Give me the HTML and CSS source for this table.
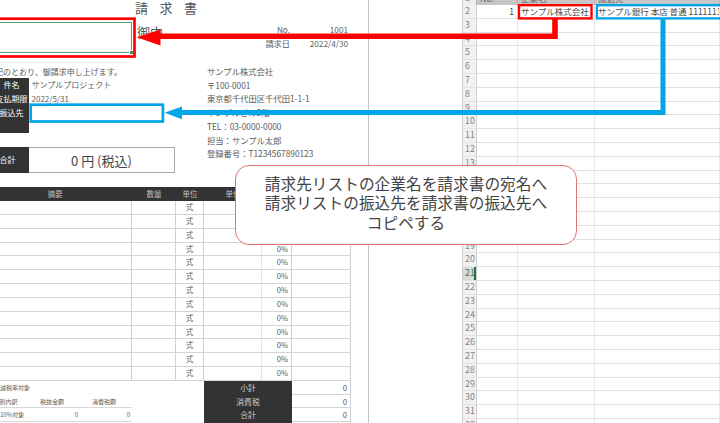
FILE: index.html
```html
<!DOCTYPE html>
<html lang="ja">
<head>
<meta charset="utf-8">
<link rel="stylesheet" href="styles.css">
</head>
<body>
<div class="screen">
  <section class="invoice">
    <div class="title">請求書</div>
    <div class="addr-row">
      <div class="addr-box"><span class="handle"></span></div>
      <div class="onchu">御中</div>
      <div class="meta">
        <div class="meta-row"><span class="k">No.</span><span class="v">1001</span></div>
        <div class="meta-row"><span class="k">請求日</span><span class="v">2022/4/30</span></div>
      </div>
    </div>
    <div class="info">
      <div class="info-left">
        <div class="greet">下記のとおり、御請求申し上げます。</div>
        <div class="field"><div class="lbl">件名</div><div class="val">サンプルプロジェクト</div></div>
        <div class="field"><div class="lbl">支払期限</div><div class="val">2022/5/31</div></div>
        <div class="field tall"><div class="lbl">振込先</div><div class="val"></div></div>
        <div class="total"><div class="lbl">合計</div><div class="total-box">0 円 (税込)</div></div>
      </div>
      <div class="info-right">
        <div>サンプル株式会社</div>
        <div>〒100-0001</div>
        <div>東京都千代田区千代田1-1-1</div>
        <div>サンプルビル3階</div>
        <div>TEL：03-0000-0000</div>
        <div>担当：サンプル太郎</div>
        <div>登録番号：T1234567890123</div>
      </div>
    </div>
    <div class="items">
      <div class="irow ihead"><div class="c1">摘要</div><div>数量</div><div>単位</div><div>単価</div><div>税率</div><div>金額</div></div>
      <div class="irow"><div></div><div></div><div>式</div><div></div><div class="r">0%</div><div></div></div>
      <div class="irow"><div></div><div></div><div>式</div><div></div><div class="r">0%</div><div></div></div>
      <div class="irow"><div></div><div></div><div>式</div><div></div><div class="r">0%</div><div></div></div>
      <div class="irow"><div></div><div></div><div>式</div><div></div><div class="r">0%</div><div></div></div>
      <div class="irow"><div></div><div></div><div>式</div><div></div><div class="r">0%</div><div></div></div>
      <div class="irow"><div></div><div></div><div>式</div><div></div><div class="r">0%</div><div></div></div>
      <div class="irow"><div></div><div></div><div>式</div><div></div><div class="r">0%</div><div></div></div>
      <div class="irow"><div></div><div></div><div>式</div><div></div><div class="r">0%</div><div></div></div>
      <div class="irow"><div></div><div></div><div>式</div><div></div><div class="r">0%</div><div></div></div>
      <div class="irow"><div></div><div></div><div>式</div><div></div><div class="r">0%</div><div></div></div>
      <div class="irow"><div></div><div></div><div>式</div><div></div><div class="r">0%</div><div></div></div>
      <div class="irow"><div></div><div></div><div>式</div><div></div><div class="r">0%</div><div></div></div>
      <div class="irow"><div></div><div></div><div>式</div><div></div><div class="r">0%</div><div></div></div>
    </div>
    <div class="foot">
      <div class="breakdown">
        <div class="brow"><div class="b1 cut1">軽減税率対象</div><div></div><div></div></div>
        <div class="brow line"><div class="b1 cut2">税率別内訳</div><div class="b2">税抜金額</div><div class="b3">消費税額</div></div>
        <div class="brow line"><div class="b1">10%対象</div><div class="b2 r">0</div><div class="b3 r">0</div></div>
      </div>
      <div class="tlabels"><div>小計</div><div>消費税</div><div>合計</div></div>
      <div class="tvals"><div>0</div><div>0</div><div>0</div></div>
    </div>
  </section>
  <div class="gap"></div>
  <section class="sheet">
    <div class="srow first"><div class="rh">1</div><div>No.</div><div>企業名</div><div>振込先</div></div>
    <div class="srow"><div class="rh">2</div><div class="num">1</div><div class="txt">サンプル株式会社</div><div class="txt">サンプル銀行 本店 普通 1111111</div></div>
    <div class="srow"><div class="rh">3</div><div></div><div></div><div></div></div>
    <div class="srow"><div class="rh">4</div><div></div><div></div><div></div></div>
    <div class="srow"><div class="rh">5</div><div></div><div></div><div></div></div>
    <div class="srow"><div class="rh">6</div><div></div><div></div><div></div></div>
    <div class="srow"><div class="rh">7</div><div></div><div></div><div></div></div>
    <div class="srow"><div class="rh">8</div><div></div><div></div><div></div></div>
    <div class="srow"><div class="rh">9</div><div></div><div></div><div></div></div>
    <div class="srow"><div class="rh">10</div><div></div><div></div><div></div></div>
    <div class="srow"><div class="rh">11</div><div></div><div></div><div></div></div>
    <div class="srow"><div class="rh">12</div><div></div><div></div><div></div></div>
    <div class="srow"><div class="rh">13</div><div></div><div></div><div></div></div>
    <div class="srow"><div class="rh">14</div><div></div><div></div><div></div></div>
    <div class="srow"><div class="rh">15</div><div></div><div></div><div></div></div>
    <div class="srow"><div class="rh">16</div><div></div><div></div><div></div></div>
    <div class="srow"><div class="rh">17</div><div></div><div></div><div></div></div>
    <div class="srow"><div class="rh">18</div><div></div><div></div><div></div></div>
    <div class="srow"><div class="rh">19</div><div></div><div></div><div></div></div>
    <div class="srow"><div class="rh">20</div><div></div><div></div><div></div></div>
    <div class="srow"><div class="rh sel">21</div><div></div><div></div><div></div></div>
    <div class="srow"><div class="rh">22</div><div></div><div></div><div></div></div>
    <div class="srow"><div class="rh">23</div><div></div><div></div><div></div></div>
    <div class="srow"><div class="rh">24</div><div></div><div></div><div></div></div>
    <div class="srow"><div class="rh">25</div><div></div><div></div><div></div></div>
    <div class="srow"><div class="rh">26</div><div></div><div></div><div></div></div>
    <div class="srow"><div class="rh">27</div><div></div><div></div><div></div></div>
    <div class="srow"><div class="rh">28</div><div></div><div></div><div></div></div>
    <div class="srow"><div class="rh">29</div><div></div><div></div><div></div></div>
    <div class="srow"><div class="rh">30</div><div></div><div></div><div></div></div>
    <div class="srow"><div class="rh">31</div><div></div><div></div><div></div></div>
    <div class="srow"><div class="rh">32</div><div></div><div></div><div></div></div>
  </section>
</div>

<svg class="overlay" width="720" height="423" viewBox="0 0 720 423">
  <rect x="-5" y="18.7" width="139.5" height="37.8" fill="none" stroke="#ff0000" stroke-width="2.7"/>
  <rect x="519" y="5.2" width="72.5" height="13.2" fill="none" stroke="#ff0000" stroke-width="2.4"/>
  <polyline points="555,18.5 555,36.3 158,36.3" fill="none" stroke="#ff0000" stroke-width="5.6"/>
  <polygon points="136.5,37.2 160.5,29.5 160.5,45.5" fill="#ff0000"/>
  <rect x="30.7" y="104.7" width="132.2" height="16.8" fill="none" stroke="#00a6e6" stroke-width="2.7"/>
  <rect x="596.9" y="5.2" width="140" height="13.2" fill="none" stroke="#00a6e6" stroke-width="2.4"/>
  <polyline points="663,18.5 663,112.5 180,112.5" fill="none" stroke="#00a6e6" stroke-width="5"/>
  <polygon points="164.5,112.8 182,106.5 182,119.2" fill="#00a6e6"/>
</svg>

<div class="callout">請求先リストの企業名を請求書の宛名へ<br>請求リストの振込先を請求書の振込先へ<br>コピペする</div>
</body>
</html>
```

FILE: styles.css
```css
* { box-sizing: border-box; margin: 0; padding: 0; }
html, body { width: 720px; height: 423px; overflow: hidden; background: #fff; }
body {
  position: relative;
  font-family: "Noto Sans CJK JP", "Noto Sans", sans-serif;
  color: #5c5c5c;
}
.screen { display: flex; width: 720px; height: 423px; }

/* ---------- invoice ---------- */
.invoice {
  width: 369px; flex: none;
  border-right: 1px solid #c4c4c4;
  overflow: hidden;
  font-size: 8px;
}
.title {
  height: 17px; padding-left: 135px;
  font-size: 13px; line-height: 15px; letter-spacing: 11.5px;
  color: #555; white-space: nowrap;
}
.addr-row { height: 48px; display: flex; }
.addr-box {
  position: relative; flex: none;
  width: 132px; height: 30.5px; margin-top: 5px;
  border: 1.5px solid #5a9e7a; border-left: none;
}
.handle {
  position: absolute; right: -3px; bottom: -3px;
  width: 5px; height: 5px; background: #3f8a62; border: 1px solid #fff;
}
.onchu { margin-left: 5px; margin-top: 8px; font-size: 13px; line-height: 14px; color: #555; }
.meta { margin-left: auto; margin-right: 20px; margin-top: 6px; font-size: 8.2px; }
.meta-row { display: flex; height: 13.6px; line-height: 13.6px; }
.meta-row .k { width: 40px; text-align: right; }
.meta-row .v { width: 58px; text-align: right; }

.info { display: flex; height: 108px; margin-bottom: 14px; }
.info-left { width: 207px; flex: none; }
.info-right { font-size: 8.3px; line-height: 13.7px; white-space: nowrap; }
.greet { height: 13px; line-height: 13px; margin-left: -13px; white-space: nowrap; }
.field { display: flex; height: 14px; }
.field.tall { height: 27px; }
.lbl {
  width: 29px; flex: none;
  background: #333; color: #fff;
  display: flex; justify-content: center;
  padding-right: 6px;
  line-height: 14px; white-space: nowrap;
}
.val { padding-left: 2.5px; line-height: 14px; white-space: nowrap; }
.total { display: flex; height: 26px; margin-top: 14px; }
.total .lbl { line-height: 26px; padding-right: 14px; }
.total-box {
  width: 146px; border: 1px solid #a8a8a8; border-left: none;
  display: flex; align-items: center; justify-content: center;
  font-size: 13px; color: #444; white-space: pre;
}

/* items table */
.irow {
  display: grid;
  grid-template-columns: 132px 44px 28px 58px 30px 59px;
  width: 351px; height: 13.85px;
}
.irow > div {
  border-right: 1px solid #cfcfcf; border-bottom: 1px solid #d4d4d4;
  text-align: center; line-height: 12.8px; font-size: 7.6px; color: #5c5c5c;
}
.irow > div.r { text-align: right; padding-right: 3px; }
.irow > div:nth-child(4) { border-right-color: #e4e4e4; }
.ihead { background: #333; height: 14px; }
.ihead > div { border: none; color: #bdbdbd; line-height: 14px; }
.ihead > .c1 { padding-right: 22px; }

/* foot */
.foot { display: grid; grid-template-columns: 204px 88px 59px; height: 42px; }
.breakdown { width: 132px; font-size: 6px; color: #5c5c5c; }
.brow {
  display: grid; grid-template-columns: 38px 52px 42px;
  height: 13.7px; line-height: 13px; white-space: nowrap;
}
.brow.line { border-bottom: 1px solid #d8d8d8; }
.cut1 { margin-left: -6px; }
.cut2 { margin-left: -12.6px; }
.b2, .b3 { padding-left: 2px; }
.b2.r { text-align: right; padding-right: 12px; }
.b3.r { text-align: right; padding-right: 2px; }
.tlabels { background: #333; color: #cfcfcf; font-size: 7.8px; }
.tlabels > div { height: 13.7px; line-height: 13.7px; text-align: center; }
.tvals { border-right: 1px solid #cfcfcf; font-size: 7.8px; }
.tvals > div {
  height: 13.7px; line-height: 13px; text-align: right; padding-right: 3px;
  border-bottom: 1px solid #d4d4d4;
}

/* ---------- gap between panes ---------- */
.gap { width: 94px; flex: none; border-right: 1px solid #cdcdcd; }

/* ---------- right spreadsheet ---------- */
.sheet { flex: 1; overflow: hidden; font-size: 8.5px; color: #4a4a4a; }
.srow {
  display: grid;
  grid-template-columns: 14px 41px 77px 1fr;
  height: 13.8px;
}
.srow > div {
  border-right: 1px solid #e8e8e8; border-bottom: 1px solid #e0e0e0;
  line-height: 12.8px; white-space: nowrap; overflow: hidden;
}
.srow > .rh {
  background: #f1f1f1; color: #858585; font-size: 8.8px;
  padding-left: 2px; border-right-color: #cfcfcf; border-bottom-color: #e4e4e4;
}
.srow > .rh.sel { background: #d9d9d9; color: #3c7a58; box-shadow: inset -2px 0 #217346; }
.srow.first { height: 5px; }
.srow.first > div {
  background: #c6c6c6; color: #666; display: flex; align-items: flex-end;
  padding-left: 3px; border-bottom: none; border-right-color: #b8b8b8;
}
.srow.first > .rh { background: #eeeeee; color: #999; padding-left: 2px; }
.srow > .num { text-align: right; padding-right: 3px; }
.srow > .txt { padding-left: 3px; }

/* ---------- overlays ---------- */
.overlay { position: absolute; left: 0; top: 0; pointer-events: none; }
.callout {
  position: absolute; left: 235px; top: 165px;
  width: 342px; height: 80px;
  background: #fff;
  border: 1.3px solid #e27272; border-radius: 14px;
  padding-top: 7.5px;
  text-align: center;
  font-size: 15.7px; line-height: 19.5px; color: #444;
  white-space: nowrap;
}
```
